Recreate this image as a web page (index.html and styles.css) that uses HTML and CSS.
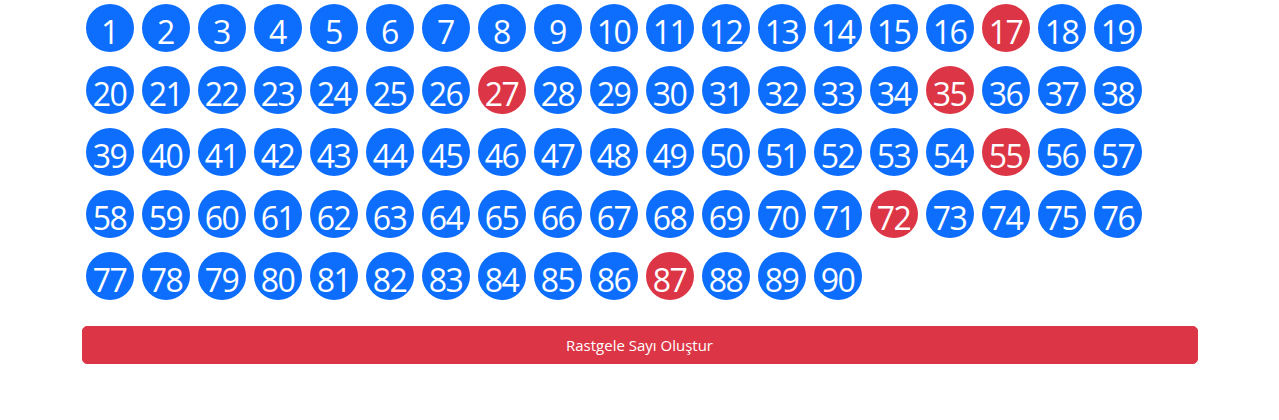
FILE: index.html
```html
<!DOCTYPE html>
<html lang="tr">
<head>
<meta charset="utf-8">
<title>Tombala</title>
<link rel="stylesheet" href="styles.css">
</head>
<body>
<div class="container">
  <div class="board" id="board"></div>
  <button class="btn-draw" type="button">Rastgele Sayı Oluştur</button>
</div>
<script>
  var drawn = [17, 27, 35, 55, 72, 87];
  var board = document.getElementById('board');
  for (var i = 1; i <= 90; i++) {
    var d = document.createElement('div');
    d.className = 'ball' + (drawn.indexOf(i) >= 0 ? ' drawn' : '');
    d.textContent = i;
    board.appendChild(d);
  }
</script>
</body>
</html>
```
FILE: styles.css
```css
html, body {
  margin: 0;
  padding: 0;
  background: #ffffff;
}
body {
  font-family: "Open Sans", "Noto Sans", sans-serif;
}
.container {
  width: 1116px;
  margin: 0 auto;
  padding: 0 12px;
  box-sizing: content-box;
}
.board {
  display: flex;
  flex-wrap: wrap;
  gap: 14px 8px;
  padding: 4px;
}
.ball {
  width: 48px;
  height: 48px;
  box-sizing: border-box;
  padding-top: 9px;
  border-radius: 50%;
  background: #0d6efd;
  color: #ffffff;
  font-size: 32px;
  line-height: 38px;
  text-align: center;
  letter-spacing: -1.5px;
}
.ball.drawn {
  background: #dc3545;
}
.btn-draw {
  display: block;
  width: 100%;
  height: 38px;
  margin-top: 22px;
  border: 1px solid #dc3545;
  border-radius: 5px;
  background: #dc3545;
  color: #ffffff;
  font-family: "Open Sans", "Noto Sans", sans-serif;
  font-size: 15px;
  cursor: pointer;
}
```
